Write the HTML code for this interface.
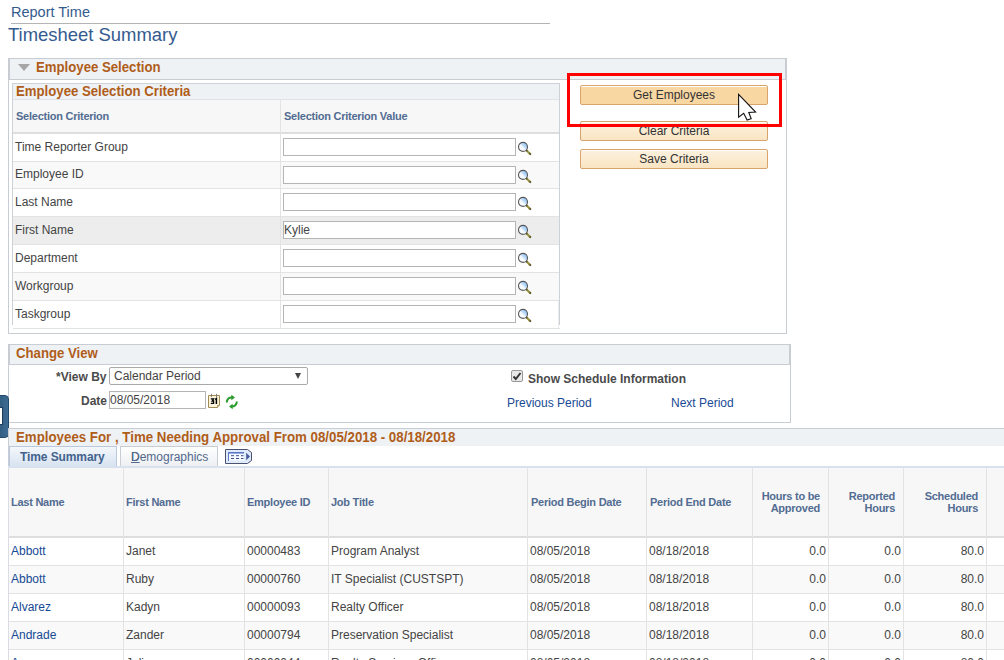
<!DOCTYPE html>
<html><head><meta charset="utf-8">
<style>
*{margin:0;padding:0;box-sizing:border-box}
html,body{width:1004px;height:660px;overflow:hidden;background:#fff}
body{position:relative;font-family:"Liberation Sans",sans-serif;color:#444;font-size:12px}
.a{position:absolute;white-space:nowrap}
.t{position:absolute;white-space:nowrap;line-height:14px}
.ttl{color:#345b8f}
.gb{color:#b05d1a;font-weight:bold;font-size:14px;line-height:16px;transform:scaleX(0.942);transform-origin:0 0}
.ch{color:#526c92;font-weight:bold;font-size:11px;letter-spacing:-0.25px;line-height:12px}
.lnk{color:#174a94}
.box{position:absolute;border:1px solid #c8cdd4}
.band{position:absolute;background:#eff2f4}
.hl{position:absolute;height:1px;background:#e3e3e3}
.vl{position:absolute;width:1px;background:#e3e3e3}
.inp{position:absolute;border:1px solid #b5b5b5;background:#fff;height:18px}
.btn{position:absolute;border:1px solid #d9a46b;border-radius:2px;background:linear-gradient(#fdf1de,#f9e5c3);height:20px;text-align:center;line-height:18px;font-size:12px;color:#333;box-shadow:inset 0 1px 0 #fff}
</style></head><body>

<!-- Title -->
<div class="t ttl" style="left:11px;top:3px;font-size:14.5px;line-height:18px">Report Time</div>
<div class="a" style="left:11px;top:23px;width:539px;height:1px;background:#b4b4b4"></div>
<div class="t ttl" style="left:8px;top:24px;font-size:18.45px;line-height:22px">Timesheet Summary</div>

<!-- Employee Selection group -->
<div class="box" style="left:8px;top:58px;width:779px;height:276px"></div>
<div class="band" style="left:9px;top:59px;width:777px;height:20px;border-left:1px solid #c8cdd4;border-right:1px solid #c8cdd4"></div>
<div class="a" style="left:9px;top:79px;width:777px;height:1px;background:#c8cdd4"></div>
<div class="a" style="left:18px;top:64px;width:0;height:0;border-left:6.5px solid transparent;border-right:6.5px solid transparent;border-top:7.5px solid #a6a6a6"></div>
<div class="t gb" style="left:36px;top:59px">Employee Selection</div>

<!-- criteria grid -->
<div class="a" style="left:12px;top:83px;width:548px;height:242px;border:1px solid #cdd2d8;border-bottom:none;background:#fff"></div>
<div class="band" style="left:13px;top:84px;width:546px;height:15px"></div>
<div class="a" style="left:13px;top:99px;width:546px;height:1px;background:#dfe3e7"></div>
<div class="t gb" style="left:16px;top:83px">Employee Selection Criteria</div>
<div class="a" style="left:13px;top:100px;width:546px;height:32px;background:#f7f7f7"></div>
<div class="a" style="left:13px;top:132px;width:546px;height:2px;background:#dedede"></div>
<div class="t ch" style="left:16px;top:110px">Selection Criterion</div>
<div class="t ch" style="left:284px;top:110px">Selection Criterion Value</div>

<div class="a" style="left:13px;top:162px;width:546px;height:26px;background:#f9f9f9"></div>
<div class="a" style="left:13px;top:217px;width:546px;height:27px;background:#ededed"></div>
<div class="a" style="left:13px;top:273px;width:546px;height:27px;background:#f9f9f9"></div>
<div class="hl" style="left:13px;top:161px;width:546px"></div>
<div class="hl" style="left:13px;top:188px;width:546px"></div>
<div class="hl" style="left:13px;top:216px;width:546px"></div>
<div class="hl" style="left:13px;top:244px;width:546px"></div>
<div class="hl" style="left:13px;top:272px;width:546px"></div>
<div class="hl" style="left:13px;top:300px;width:546px"></div>
<div class="hl" style="left:13px;top:328px;width:547px;background:#e3e3e3"></div><div class="vl" style="left:558px;top:301px;height:27px;background:#ececec"></div>
<div class="vl" style="left:280px;top:100px;height:228px"></div>

<div class="t" style="left:15px;top:140px">Time Reporter Group</div>
<div class="t" style="left:15px;top:167px">Employee ID</div>
<div class="t" style="left:15px;top:195px">Last Name</div>
<div class="t" style="left:15px;top:223px">First Name</div>
<div class="t" style="left:15px;top:251px">Department</div>
<div class="t" style="left:15px;top:279px">Workgroup</div>
<div class="t" style="left:15px;top:307px">Taskgroup</div>

<div class="inp" style="left:283px;top:138px;width:233px"></div>
<div class="inp" style="left:283px;top:166px;width:233px"></div>
<div class="inp" style="left:283px;top:193px;width:233px"></div>
<div class="inp" style="left:283px;top:221px;width:233px"></div>
<div class="inp" style="left:283px;top:249px;width:233px"></div>
<div class="inp" style="left:283px;top:277px;width:233px"></div>
<div class="inp" style="left:283px;top:305px;width:233px"></div>
<div class="t" style="left:284px;top:223px">Kylie</div>

<!-- buttons -->
<div class="btn" style="left:580px;top:85px;width:188px;background:#f8d7a3">Get Employees</div>
<div class="btn" style="left:580px;top:121px;width:188px">Clear Criteria</div>
<div class="btn" style="left:580px;top:149px;width:188px">Save Criteria</div>
<div class="a" style="left:567px;top:73px;width:215px;height:54px;border:3px solid #f00"></div>
<svg class="a" style="left:736px;top:92px" width="24" height="32" viewBox="0 0 24 32"><path transform="translate(2.6 2.4)" d="M0 0 L0 22.8 L5.1 18.9 L8.5 25.7 L12.6 24.3 L10.2 18 L17 17.7 Z" fill="#fff" stroke="#111" stroke-width="1.1" stroke-linejoin="miter"/></svg>

<!-- Change View -->
<div class="box" style="left:8px;top:344px;width:783px;height:79px"></div>
<div class="band" style="left:9px;top:345px;width:781px;height:19px;border-left:1px solid #c8cdd4;border-right:1px solid #c8cdd4"></div>
<div class="a" style="left:9px;top:364px;width:781px;height:1px;background:#c8cdd4"></div>
<div class="t gb" style="left:16px;top:345px">Change View</div>
<div class="t" style="left:56px;top:370px;font-weight:bold;color:#4a4a4a">*View By</div>
<div class="a" style="left:109px;top:367px;width:199px;height:18px;border:1px solid #a9a9a9;border-radius:2px;background:#fff"></div>
<div class="t" style="left:114px;top:369px">Calendar Period</div>
<div class="t" style="left:81px;top:394px;font-weight:bold;color:#4a4a4a">Date</div>
<div class="a" style="left:109px;top:391px;width:97px;height:18px;border:1px solid #b5b5b5;background:#fff"></div>
<div class="t" style="left:110px;top:393px">08/05/2018</div>
<div class="a" style="left:511px;top:370px;width:12px;height:12px;border:1px solid #999;border-radius:2px;background:#e8e8e8"></div>
<div class="t" style="left:528px;top:372px;font-weight:bold;color:#4a4a4a">Show Schedule Information</div>
<div class="t lnk" style="left:507px;top:396px">Previous Period</div>
<div class="t lnk" style="left:671px;top:396px">Next Period</div>

<!-- left blue tab -->
<div class="a" style="left:-6px;top:395px;width:15px;height:43px;background:linear-gradient(90deg,#2c5678,#3d6b93);border:1px solid #244a6b;border-radius:0 4px 4px 0"></div>

<!-- Employees For -->
<div class="a" style="left:8px;top:428px;width:996px;height:1px;background:#c8cdd4"></div>
<div class="a" style="left:8px;top:429px;width:1px;height:40px;background:#c8cdd4"></div>
<div class="band" style="left:9px;top:429px;width:995px;height:17px"></div>
<div class="t gb" style="left:16px;top:429px;transform:scaleX(0.949)">Employees For , Time Needing Approval From 08/05/2018 - 08/18/2018</div>

<!-- tabs -->
<div class="a" style="left:9px;top:446px;width:108px;height:20px;border:1px solid #b9c8dc;border-bottom:none;background:linear-gradient(#f4f7fb,#d8e3f1)"></div>
<div class="t" style="left:20px;top:450px;font-weight:bold;color:#42628c;letter-spacing:-0.1px">Time Summary</div>
<div class="a" style="left:120px;top:446px;width:98px;height:20px;border:1px solid #c8cdd4;border-bottom:none;background:linear-gradient(#ffffff,#edeff2)"></div>
<div class="t" style="left:131px;top:450px;color:#52698c;text-decoration:underline">D</div>
<div class="t" style="left:131px;top:450px;color:#52698c">Demographics</div>


<div class="a" style="left:8px;top:466px;width:996px;height:2px;background:#d8e2ee"></div>

<!-- Table -->
<div class="a" style="left:8px;top:468px;width:996px;height:68px;background:#f7f7f7"></div>
<div class="a" style="left:8px;top:536px;width:996px;height:2px;background:#dedede"></div>
<div class="a" style="left:8px;top:468px;width:1px;height:192px;background:#d9dde2"></div>
<div class="a" style="left:9px;top:566px;width:995px;height:27px;background:#f9f9f9"></div>
<div class="a" style="left:9px;top:622px;width:995px;height:27px;background:#f9f9f9"></div>
<div class="hl" style="left:9px;top:565px;width:995px"></div>
<div class="hl" style="left:9px;top:593px;width:995px"></div>
<div class="hl" style="left:9px;top:621px;width:995px"></div>
<div class="hl" style="left:9px;top:649px;width:995px"></div>
<div class="vl" style="left:123px;top:468px;height:192px"></div>
<div class="vl" style="left:244px;top:468px;height:192px"></div>
<div class="vl" style="left:328px;top:468px;height:192px"></div>
<div class="vl" style="left:527px;top:468px;height:192px"></div>
<div class="vl" style="left:646px;top:468px;height:192px"></div>
<div class="vl" style="left:752px;top:468px;height:192px"></div>
<div class="vl" style="left:828px;top:468px;height:192px"></div>
<div class="vl" style="left:903px;top:468px;height:192px"></div>
<div class="vl" style="left:986px;top:468px;height:192px"></div>

<div class="t ch" style="left:11px;top:496px">Last Name</div>
<div class="t ch" style="left:126px;top:496px">First Name</div>
<div class="t ch" style="left:247px;top:496px">Employee ID</div>
<div class="t ch" style="left:331px;top:496px">Job Title</div>
<div class="t ch" style="left:531px;top:496px">Period Begin Date</div>
<div class="t ch" style="left:650px;top:496px">Period End Date</div>
<div class="t ch" style="left:720px;top:490px;width:100px;text-align:right">Hours to be<br>Approved</div>
<div class="t ch" style="left:795px;top:490px;width:100px;text-align:right">Reported<br>Hours</div>
<div class="t ch" style="left:878px;top:490px;width:100px;text-align:right">Scheduled<br>Hours</div>

<div class="t lnk" style="left:11px;top:544px">Abbott</div>
<div class="t" style="left:126px;top:544px">Janet</div>
<div class="t" style="left:247px;top:544px">00000483</div>
<div class="t" style="left:331px;top:544px">Program Analyst</div>
<div class="t" style="left:530px;top:544px">08/05/2018</div>
<div class="t" style="left:649px;top:544px">08/18/2018</div>
<div class="t" style="left:726px;top:544px;width:100px;text-align:right">0.0</div>
<div class="t" style="left:801px;top:544px;width:100px;text-align:right">0.0</div>
<div class="t" style="left:884px;top:544px;width:100px;text-align:right">80.0</div>
<div class="t lnk" style="left:11px;top:572px">Abbott</div>
<div class="t" style="left:126px;top:572px">Ruby</div>
<div class="t" style="left:247px;top:572px">00000760</div>
<div class="t" style="left:331px;top:572px">IT Specialist (CUSTSPT)</div>
<div class="t" style="left:530px;top:572px">08/05/2018</div>
<div class="t" style="left:649px;top:572px">08/18/2018</div>
<div class="t" style="left:726px;top:572px;width:100px;text-align:right">0.0</div>
<div class="t" style="left:801px;top:572px;width:100px;text-align:right">0.0</div>
<div class="t" style="left:884px;top:572px;width:100px;text-align:right">80.0</div>
<div class="t lnk" style="left:11px;top:600px">Alvarez</div>
<div class="t" style="left:126px;top:600px">Kadyn</div>
<div class="t" style="left:247px;top:600px">00000093</div>
<div class="t" style="left:331px;top:600px">Realty Officer</div>
<div class="t" style="left:530px;top:600px">08/05/2018</div>
<div class="t" style="left:649px;top:600px">08/18/2018</div>
<div class="t" style="left:726px;top:600px;width:100px;text-align:right">0.0</div>
<div class="t" style="left:801px;top:600px;width:100px;text-align:right">0.0</div>
<div class="t" style="left:884px;top:600px;width:100px;text-align:right">80.0</div>
<div class="t lnk" style="left:11px;top:628px">Andrade</div>
<div class="t" style="left:126px;top:628px">Zander</div>
<div class="t" style="left:247px;top:628px">00000794</div>
<div class="t" style="left:331px;top:628px">Preservation Specialist</div>
<div class="t" style="left:530px;top:628px">08/05/2018</div>
<div class="t" style="left:649px;top:628px">08/18/2018</div>
<div class="t" style="left:726px;top:628px;width:100px;text-align:right">0.0</div>
<div class="t" style="left:801px;top:628px;width:100px;text-align:right">0.0</div>
<div class="t" style="left:884px;top:628px;width:100px;text-align:right">80.0</div>
<div class="t lnk" style="left:11px;top:656px">Arenas</div>
<div class="t" style="left:126px;top:656px">Julian</div>
<div class="t" style="left:247px;top:656px">00000044</div>
<div class="t" style="left:331px;top:656px">Realty Services Officer</div>
<div class="t" style="left:530px;top:656px">08/05/2018</div>
<div class="t" style="left:649px;top:656px">08/18/2018</div>
<div class="t" style="left:726px;top:656px;width:100px;text-align:right">0.0</div>
<div class="t" style="left:801px;top:656px;width:100px;text-align:right">0.0</div>
<div class="t" style="left:884px;top:656px;width:100px;text-align:right">80.0</div>
<svg width="0" height="0" style="position:absolute"><defs>
<linearGradient id="mg" x1="0" y1="1" x2="1" y2="0"><stop offset="0" stop-color="#ffffff"/><stop offset="0.45" stop-color="#f4f9ff"/><stop offset="0.55" stop-color="#cfe4fb"/><stop offset="1" stop-color="#5ea9f2"/></linearGradient>
<linearGradient id="hg" x1="0" y1="0" x2="1" y2="1"><stop offset="0" stop-color="#4f4a1a"/><stop offset="0.5" stop-color="#a9a548"/><stop offset="1" stop-color="#5a5520"/></linearGradient>
</defs></svg>
<svg class="a" style="left:516px;top:140px" width="16" height="17" viewBox="0 0 16 17"><path d="M10.3 10.2 L14.2 14" stroke="url(#hg)" stroke-width="2.2" stroke-linecap="round"/><circle cx="7" cy="6.9" r="4.5" fill="url(#mg)" stroke="#575757" stroke-width="1.1"/></svg>
<svg class="a" style="left:516px;top:168px" width="16" height="17" viewBox="0 0 16 17"><path d="M10.3 10.2 L14.2 14" stroke="url(#hg)" stroke-width="2.2" stroke-linecap="round"/><circle cx="7" cy="6.9" r="4.5" fill="url(#mg)" stroke="#575757" stroke-width="1.1"/></svg>
<svg class="a" style="left:516px;top:195px" width="16" height="17" viewBox="0 0 16 17"><path d="M10.3 10.2 L14.2 14" stroke="url(#hg)" stroke-width="2.2" stroke-linecap="round"/><circle cx="7" cy="6.9" r="4.5" fill="url(#mg)" stroke="#575757" stroke-width="1.1"/></svg>
<svg class="a" style="left:516px;top:223px" width="16" height="17" viewBox="0 0 16 17"><path d="M10.3 10.2 L14.2 14" stroke="url(#hg)" stroke-width="2.2" stroke-linecap="round"/><circle cx="7" cy="6.9" r="4.5" fill="url(#mg)" stroke="#575757" stroke-width="1.1"/></svg>
<svg class="a" style="left:516px;top:251px" width="16" height="17" viewBox="0 0 16 17"><path d="M10.3 10.2 L14.2 14" stroke="url(#hg)" stroke-width="2.2" stroke-linecap="round"/><circle cx="7" cy="6.9" r="4.5" fill="url(#mg)" stroke="#575757" stroke-width="1.1"/></svg>
<svg class="a" style="left:516px;top:279px" width="16" height="17" viewBox="0 0 16 17"><path d="M10.3 10.2 L14.2 14" stroke="url(#hg)" stroke-width="2.2" stroke-linecap="round"/><circle cx="7" cy="6.9" r="4.5" fill="url(#mg)" stroke="#575757" stroke-width="1.1"/></svg>
<svg class="a" style="left:516px;top:307px" width="16" height="17" viewBox="0 0 16 17"><path d="M10.3 10.2 L14.2 14" stroke="url(#hg)" stroke-width="2.2" stroke-linecap="round"/><circle cx="7" cy="6.9" r="4.5" fill="url(#mg)" stroke="#575757" stroke-width="1.1"/></svg>
<div class="a" style="left:295px;top:373px;width:0;height:0;border-left:3px solid transparent;border-right:3px solid transparent;border-top:6px solid #444"></div>
<svg class="a" style="left:207px;top:393px" width="14" height="16" viewBox="0 0 14 16">
<path d="M1.5 2.5 H12.5 V12.5 L10.5 14.5 H1.5 Z" fill="#fdf4dc" stroke="#a38a55" stroke-width="1"/>
<path d="M10.5 14.5 V12.5 H12.5" fill="#e8d8b0" stroke="#a38a55" stroke-width="0.8"/>
<rect x="4.1" y="0.8" width="0.9" height="3.2" fill="#777"/><rect x="9.1" y="0.8" width="0.9" height="3.2" fill="#777"/>
<path d="M3.8 5.9 H6.6 L5.2 8 H6.6 V10.3 H3.8" fill="none" stroke="#000" stroke-width="1.3"/><path d="M8.2 6.6 L9.4 5.6 V11" fill="none" stroke="#000" stroke-width="1.5"/>
</svg>
<svg class="a" style="left:225px;top:394px" width="14" height="16" viewBox="0 0 14 16">
<path d="M1.8 8.5 A4.8 4.8 0 0 1 7.5 3.5" fill="none" stroke="#2b9b2b" stroke-width="2"/>
<path d="M6.3 0.8 L10 3.6 L6.3 6.3 Z" fill="#2b9b2b"/>
<path d="M11.8 7.5 A4.8 4.8 0 0 1 6.5 12.5" fill="none" stroke="#2b9b2b" stroke-width="2"/>
<path d="M7.7 9.7 L4 12.4 L7.7 15.2 Z" fill="#2b9b2b"/>
</svg>
<svg class="a" style="left:511px;top:370px" width="12" height="12" viewBox="0 0 12 12"><path d="M2.5 6.5 L4.8 9 L9.5 3" fill="none" stroke="#333" stroke-width="2"/></svg>
<svg class="a" style="left:225px;top:449px" width="28" height="16" viewBox="0 0 28 16">
<path d="M0.5 0.5 H22.5 L26.5 3.5 V11.5 L22.5 14.5 H0.5 Z" fill="#dfeafa" stroke="#4b5170" stroke-width="1"/>
<rect x="3" y="3.5" width="16" height="8" fill="#f7faff"/>
<rect x="3" y="3" width="16" height="1.6" fill="#5b78c8"/><rect x="3" y="3" width="1" height="9" fill="#5b78c8"/>
<path d="M6 6.7 H9 M11 6.7 H14 M16 6.7 H18.5 M6 9.5 H9 M11 9.5 H14 M16 9.5 H18.5" stroke="#3c4f8a" stroke-width="1"/>
<path d="M21.2 3.8 L25 7.5 L21.2 11.2 Z" fill="#4a5a9a"/>
</svg>
<div class="a" style="left:-2px;top:407px;width:5px;height:18px;background:#fff;border:1px solid #1d3d5a"></div>
</body></html>
